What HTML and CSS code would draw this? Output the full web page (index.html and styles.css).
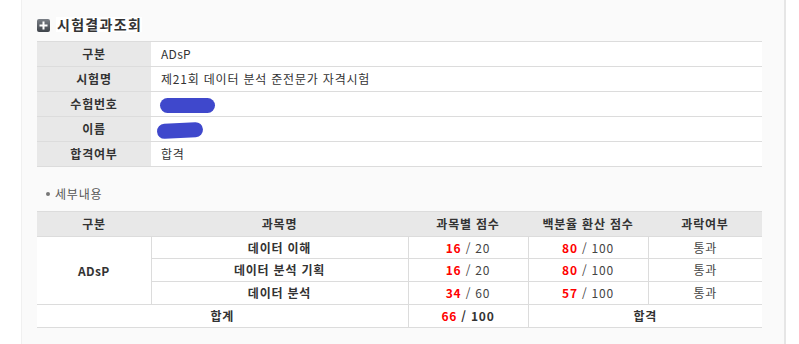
FILE: index.html
```html
<!DOCTYPE html>
<html lang="ko">
<head>
<meta charset="utf-8">
<title>시험결과조회</title>
<link rel="stylesheet" href="styles.css">
</head>
<body>
<div class="panel">
  <h2 class="title">
    <span class="title-icon"><svg width="13" height="13" viewBox="0 0 13 13"><defs><linearGradient id="g" x1="0" y1="0" x2="0" y2="1"><stop offset="0" stop-color="#7a7f86"/><stop offset="1" stop-color="#3f444b"/></linearGradient></defs><rect x="0" y="0" width="13" height="13" rx="2" fill="url(#g)"/><rect x="5.5" y="2.5" width="2" height="8" fill="#fff"/><rect x="2.5" y="5.5" width="8" height="2" fill="#fff"/></svg></span>
    <span class="title-text">시험결과조회</span>
  </h2>

  <table class="info">
    <tr><th>구분</th><td class="latin">ADsP</td></tr>
    <tr><th>시험명</th><td>제21회 데이터 분석 준전문가 자격시험</td></tr>
    <tr><th>수험번호</th><td><span class="redact redact-a"></span></td></tr>
    <tr><th>이름</th><td><span class="redact redact-b"></span></td></tr>
    <tr><th>합격여부</th><td>합격</td></tr>
  </table>

  <p class="sub"><span class="dot"></span>세부내용</p>

  <table class="detail">
    <colgroup>
      <col class="c1"><col class="c2"><col class="c3"><col class="c4"><col class="c5">
    </colgroup>
    <thead>
      <tr><th>구분</th><th>과목명</th><th>과목별 점수</th><th>백분율 환산 점수</th><th>과락여부</th></tr>
    </thead>
    <tbody>
      <tr class="first"><td rowspan="3" class="b latin">ADsP</td><td class="b">데이터 이해</td><td><span class="pt">16</span> / 20</td><td><span class="pt">80</span> / 100</td><td>통과</td></tr>
      <tr><td class="b">데이터 분석 기획</td><td><span class="pt">16</span> / 20</td><td><span class="pt">80</span> / 100</td><td>통과</td></tr>
      <tr><td class="b">데이터 분석</td><td><span class="pt">34</span> / 60</td><td><span class="pt">57</span> / 100</td><td>통과</td></tr>
      <tr class="total"><td colspan="2" class="b">합계</td><td class="b"><span class="pt">66</span> / 100</td><td colspan="2" class="b">합격</td></tr>
    </tbody>
  </table>
</div>
</body>
</html>
```
FILE: styles.css
```css
html, body {
  margin: 0;
  padding: 0;
  background: #fff;
}
body {
  font-family: "Noto Sans CJK KR", "Noto Sans", sans-serif;
  font-size: 12px;
  color: #333;
  letter-spacing: 0.8px;
}
.latin { letter-spacing: 0.3px; }
.panel {
  margin-left: 21px;
  width: 765px;
  height: 344px;
  box-sizing: border-box;
  background: #fafafa;
  border-left: 1px solid #f0f0f0;
  border-right: 2px solid #e6e6e6;
  padding: 17px 22px 0 15px;
}
.title {
  margin: 0;
  height: 24px;
  display: flex;
  align-items: flex-start;
  gap: 6px;
  font-size: 14px;
  font-weight: bold;
  line-height: 15px;
  letter-spacing: 1.3px;
  color: #333;
}
.title-icon {
  display: block;
  width: 13px;
  height: 13px;
  margin-top: 2px;
}
.title-icon svg { display: block; }
.title-text {
  background: #fff;
  padding: 0 0 0 1px;
}
table {
  border-collapse: collapse;
  width: 725px;
  table-layout: fixed;
}
.info th, .info td {
  height: 24px;
  padding: 0;
  border-top: 1px solid #dcdcdc;
  border-bottom: 1px solid #dcdcdc;
  line-height: 16px;
}
.info th {
  width: 114px;
  background: #e8e8e8;
  font-weight: bold;
  text-align: center;
  color: #333;
}
.info td {
  background: #fff;
  padding-left: 10px;
  color: #333;
}
.redact {
  display: inline-block;
  vertical-align: middle;
  background: #3f48cc;
  border-radius: 8px;
}
.redact-a {
  width: 55px;
  height: 15px;
  margin-left: -1px;
}
.redact-b {
  width: 46px;
  height: 15px;
  margin-left: -4px;
  transform: rotate(-3deg);
}
.sub {
  margin: 0;
  height: 44px;
  padding-top: 19px;
  box-sizing: border-box;
  display: flex;
  align-items: flex-start;
  color: #555;
  font-size: 12px;
  line-height: 16px;
}
.dot {
  width: 4px;
  height: 4px;
  border-radius: 50%;
  background: #777;
  margin: 6px 5px 0 9px;
}
.detail .c1 { width: 114px; }
.detail .c2 { width: 257px; }
.detail .c3 { width: 120px; }
.detail .c4 { width: 120px; }
.detail .c5 { width: 114px; }
.detail th {
  height: 24px;
  padding: 0;
  background: #e8e8e8;
  border-top: 1px solid #dcdcdc;
  border-bottom: 1px solid #dcdcdc;
  font-weight: bold;
  text-align: center;
  line-height: 16px;
  color: #333;
}
.detail td {
  height: 22px;
  padding: 0;
  background: #fff;
  border-top: 1px solid #dcdcdc;
  border-bottom: 1px solid #dcdcdc;
  text-align: center;
  line-height: 16px;
  color: #444;
}
.detail tr.first td:nth-child(n+2) {
  height: 21px;
}
.detail tbody tr:not(.total) td:nth-child(n+2),
.detail .total td:nth-child(n+2) {
  border-left: 1px solid #dcdcdc;
}
.detail tbody tr.first td:first-child {
  border-left: 0;
}
.detail tbody tr:nth-child(2) td:first-child,
.detail tbody tr:nth-child(3) td:first-child {
  border-left: 1px solid #dcdcdc;
}
.detail .b {
  font-weight: bold;
  color: #333;
}
.pt {
  color: #ff0000;
  font-weight: bold;
}
```
